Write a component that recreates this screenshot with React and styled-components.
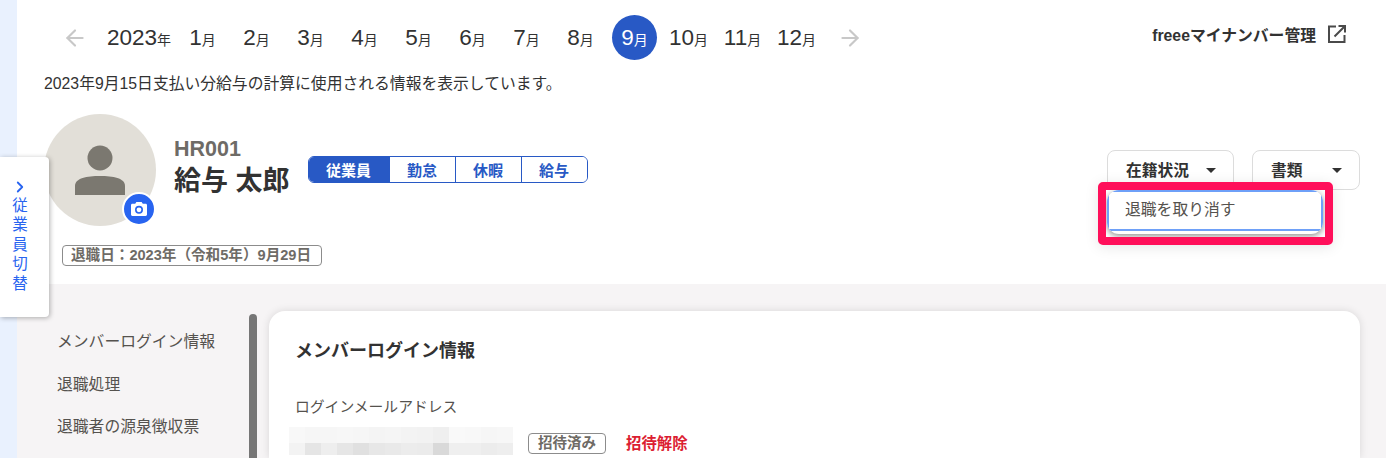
import React from 'react'
import styled, { createGlobalStyle } from 'styled-components'
import { ArrowLeft, ArrowRight, ChevronRight } from 'lucide-react'

const GlobalStyle = createGlobalStyle`
  html, body {
    margin: 0;
    height: 458px;
    overflow: hidden;
    background: #fff;
  }
  body {
    font-family: 'Liberation Sans', 'Noto Sans CJK JP', sans-serif;
    color: #323232;
  }
`

const Page = styled.div`
  display: flex;
  height: 458px;
  position: relative;
  overflow: hidden;
`

const Strip = styled.div`
  width: 17px;
  flex: none;
  background: #e9f1fe;
`

const Main = styled.main`
  flex: 1;
  display: flex;
  flex-direction: column;
  min-width: 0;
`

const Header = styled.header`
  height: 284px;
  flex: none;
  box-sizing: border-box;
  padding: 15px 26px 0 27px;
  background: #fff;
`

const TopRow = styled.div`
  display: flex;
  align-items: center;
  justify-content: space-between;
  height: 45px;
`

const MonthNav = styled.nav`
  display: flex;
  align-items: center;
  gap: 9px;
  padding-left: 18px;
`

const NavArrow = styled.span`
  display: flex;
  color: #c8c8c8;
  margin: ${p => (p.$end ? '0 0 0 9px' : '0 10px 0 0')};
`

const Year = styled.span`
  display: block;
  width: 64px;
  white-space: nowrap;
  font-size: 22.5px;
  color: #323232;
`

const Month = styled.span`
  width: 45px;
  height: 45px;
  border-radius: 50%;
  display: flex;
  align-items: center;
  justify-content: center;
  font-size: 22.5px;
  white-space: nowrap;
  color: ${p => (p.$active ? '#fff' : '#323232')};
  background: ${p => (p.$active ? '#2859c5' : 'transparent')};
`

const Unit = styled.small`
  font-size: 14px;
  margin-top: 3px;
  display: inline-block;
`

const ExternalLink = styled.a`
  display: flex;
  align-items: center;
  gap: 12px;
  font-size: 15.8px;
  font-weight: 700;
  color: #323232;
  margin: 0 14px 7px 0;
`

const Notice = styled.p`
  margin: 14px 0 0;
  font-size: 15.8px;
  line-height: 20px;
  color: #323232;
`

const Profile = styled.section`
  display: flex;
  margin-top: 20px;
`

const Avatar = styled.div`
  width: 112px;
  height: 112px;
  border-radius: 50%;
  background: #e2dfd8;
  position: relative;
  flex: none;
  display: flex;
  align-items: center;
  justify-content: center;
`

const CameraBadge = styled.span`
  position: absolute;
  right: 0;
  bottom: 0;
  width: 30px;
  height: 30px;
  border-radius: 50%;
  border: 2px solid #fff;
  background: #2864f0;
  display: flex;
  align-items: center;
  justify-content: center;
`

const Identity = styled.div`
  margin: 22px 0 0 18px;
`

const Code = styled.div`
  font-size: 21.5px;
  font-weight: 700;
  line-height: 26px;
  color: #6e6b66;
`

const Name = styled.h1`
  margin: 3px 0 0;
  font-size: 27px;
  line-height: 32px;
  font-weight: 700;
  color: #323232;
`

const Tabs = styled.div`
  display: flex;
  height: 27px;
  box-sizing: border-box;
  margin: 42px 0 0 18px;
  border: 1px solid #2859c5;
  border-radius: 6px;
  overflow: hidden;
`

const Tab = styled.span`
  width: ${p => p.$width}px;
  box-sizing: border-box;
  display: flex;
  align-items: center;
  justify-content: center;
  font-size: 15px;
  font-weight: 700;
  padding-bottom: 1px;
  color: ${p => (p.$active ? '#fff' : '#2859c5')};
  background: ${p => (p.$active ? '#2859c5' : '#fff')};
  & + & {
    border-left: 1px solid #2859c5;
  }
`

const Actions = styled.div`
  margin: 36px 0 0 auto;
  display: flex;
  gap: 18px;
`

const SelectButton = styled.button`
  width: ${p => p.$width}px;
  height: 40px;
  box-sizing: border-box;
  border: 1px solid #dcdcdc;
  border-radius: 8px;
  background: #fff;
  font: 700 15.75px 'Liberation Sans', 'Noto Sans CJK JP', sans-serif;
  color: #323232;
  display: flex;
  align-items: center;
  justify-content: space-between;
  padding: 0 17px 2px 18px;
`

const Caret = styled.i`
  width: 0;
  height: 0;
  margin-top: 3px;
  border-left: 5px solid transparent;
  border-right: 5px solid transparent;
  border-top: 5px solid #323232;
`

const RetireBadge = styled.div`
  width: 260px;
  height: 21px;
  box-sizing: border-box;
  margin: 19px 0 0 18px;
  border: 1px solid #8c8c8c;
  border-radius: 4px;
  font-size: 14.6px;
  font-weight: 700;
  line-height: 18px;
  color: #6e6b66;
  padding-left: 8px;
  white-space: nowrap;
`

const Content = styled.div`
  flex: 1;
  display: flex;
  background: #f6f4f5;
  min-height: 0;
  padding-left: 27px;
`

const SideNav = styled.ul`
  list-style: none;
  margin: 0;
  padding: 47px 0 0 13px;
  width: 192px;
  box-sizing: border-box;
  font-size: 15.8px;
  color: #55524e;
`

const SideItem = styled.li`
  height: 42.5px;
  line-height: 22px;
  white-space: nowrap;
`

const Scrollbar = styled.div`
  width: 8px;
  margin: 30px 0 0 13px;
  background: #767676;
  border-radius: 4px 4px 0 0;
  flex: none;
`

const Card = styled.section`
  width: 1091px;
  margin: 27px 0 0 12px;
  flex: none;
  box-sizing: border-box;
  padding: 27px 26px 0 26px;
  background: #fff;
  border-radius: 16px 16px 0 0;
  box-shadow: 0 0 8px rgba(0, 0, 0, 0.12);
`

const CardTitle = styled.h2`
  margin: 0;
  font-size: 18px;
  line-height: 26px;
  font-weight: 700;
  color: #323232;
`

const FieldLabel = styled.div`
  margin-top: 32px;
  font-size: 14.8px;
  line-height: 22px;
  color: #55524e;
`

const FieldRow = styled.div`
  display: flex;
  margin: 9px 0 0 -6px;
`

const Mosaic = styled.div`
  display: grid;
  grid-template-columns: repeat(14, 16px);
  grid-template-rows: 16px 12px;
  flex: none;
`

const MosaicCell = styled.span`
  background: ${p => p.$shade};
`

const InviteBadge = styled.span`
  margin: 6px 0 0 15px;
  width: 78px;
  height: 21px;
  box-sizing: border-box;
  border: 1px solid #8c8c8c;
  border-radius: 4px;
  font-size: 14.5px;
  font-weight: 700;
  line-height: 18px;
  text-align: center;
  color: #6e6b66;
`

const DangerLink = styled.a`
  margin: 6px 0 0 20px;
  font-size: 15.4px;
  font-weight: 700;
  line-height: 21px;
  color: #dc1e32;
`

const SwitchTab = styled.aside`
  position: absolute;
  left: 0;
  top: 157px;
  width: 49px;
  height: 160px;
  box-sizing: border-box;
  padding: 21px 9px 0 0;
  background: #fff;
  border-radius: 0 4px 4px 0;
  box-shadow: 1px 1px 5px rgba(0, 0, 0, 0.3);
  display: flex;
  flex-direction: column;
  align-items: center;
  color: #2864f0;
  font-size: 15.5px;
  line-height: 19.4px;
`

const SwitchChevron = styled(ChevronRight)`
  flex: none;
`

const Highlight = styled.div`
  position: absolute;
  left: 1098px;
  top: 182px;
  width: 235px;
  height: 63px;
  box-sizing: border-box;
  border: 8px solid #ff0f5a;
  border-radius: 5px;
  padding-left: 1px;
  background: #fff;
  overflow: hidden;
  box-shadow: 0 2px 14px rgba(0, 0, 0, 0.1);
`

const MenuPanel = styled.div`
  width: 216px;
  height: 44px;
  background: #fff;
  border-radius: 12px;
  overflow: hidden;
  box-shadow: 0 2px 6px rgba(0, 0, 0, 0.45);
`

const MenuItem = styled.div`
  height: 41px;
  box-sizing: border-box;
  border: 2px solid #6ea0f8;
  border-radius: 2px;
  padding-left: 16px;
  font-size: 15.8px;
  line-height: 35px;
  color: #55524e;
`

const months = [1, 2, 3, 4, 5, 6, 7, 8, 9, 10, 11, 12]
const tabs = [
  { label: '従業員', width: 80, active: true },
  { label: '勤怠', width: 66 },
  { label: '休暇', width: 66 },
  { label: '給与', width: 66 },
]
const sideItems = ['メンバーログイン情報', '退職処理', '退職者の源泉徴収票']
const mosaicShades = [
  '#f8f8f8', '#f6f6f6', '#f6f6f6', '#f7f7f7', '#f6f6f6', '#f4f4f4', '#f5f5f5', '#f3f3f3', '#f2f2f2', '#efefef', '#f9f9f9', '#f8f8f8', '#f6f6f6', '#f7f7f7',
  '#f3f3f3', '#e5e5e5', '#eeeeee', '#e6e6e6', '#e0e0e0', '#e7e7e7', '#e9e9e9', '#ececec', '#ebebeb', '#d9d9d9', '#efefef', '#efefef', '#ececec', '#eeeeee',
]

const PersonIcon = () => (
  <svg width="50" height="50" viewBox="0 0 50 50" fill="#7b7870">
    <circle cx="25" cy="13" r="12.5" />
    <path d="M0 50V41C0 33 12 31 25 31S50 33 50 41V50Z" />
  </svg>
)

const CameraIcon = () => (
  <svg width="16" height="14" viewBox="0 0 16 14">
    <path fill="#fff" d="M5.4 0 4.2 1.8H1.4C.6 1.8 0 2.4 0 3.2v9.4C0 13.4.6 14 1.4 14h13.2c.8 0 1.4-.6 1.4-1.4V3.2c0-.8-.6-1.4-1.4-1.4h-2.8L10.6 0Z" />
    <circle cx="8" cy="7.8" r="3.2" fill="none" stroke="#2864f0" strokeWidth="1.6" />
  </svg>
)

const OpenIcon = () => (
  <svg width="18" height="18" viewBox="0 0 18 18" fill="none" stroke="#4a4a4a" strokeWidth="2">
    <path d="M8 1.5H1V17H16.5V10" />
    <path d="M6.5 11.5 16.5 1.5M10.5 1H17V7.5" />
  </svg>
)

const App = () => (
  <Page>
    <GlobalStyle />
    <Strip />
    <Main>
      <Header>
        <TopRow>
          <MonthNav>
            <NavArrow><ArrowLeft size={26} strokeWidth={2} /></NavArrow>
            <Year>2023<Unit>年</Unit></Year>
            {months.map(m => (
              <Month key={m} $active={m === 9}>{m}<Unit>月</Unit></Month>
            ))}
            <NavArrow $end><ArrowRight size={26} strokeWidth={2} /></NavArrow>
          </MonthNav>
          <ExternalLink>freeeマイナンバー管理<OpenIcon /></ExternalLink>
        </TopRow>
        <Notice>2023年9月15日支払い分給与の計算に使用される情報を表示しています。</Notice>
        <Profile>
          <Avatar>
            <PersonIcon />
            <CameraBadge><CameraIcon /></CameraBadge>
          </Avatar>
          <Identity>
            <Code>HR001</Code>
            <Name>給与 太郎</Name>
          </Identity>
          <Tabs>
            {tabs.map(t => (
              <Tab key={t.label} $width={t.width} $active={t.active}>{t.label}</Tab>
            ))}
          </Tabs>
          <Actions>
            <SelectButton $width={127}>在籍状況<Caret /></SelectButton>
            <SelectButton $width={108}>書類<Caret /></SelectButton>
          </Actions>
        </Profile>
        <RetireBadge>退職日：2023年（令和5年）9月29日</RetireBadge>
      </Header>
      <Content>
        <SideNav>
          {sideItems.map(item => <SideItem key={item}>{item}</SideItem>)}
        </SideNav>
        <Scrollbar />
        <Card>
          <CardTitle>メンバーログイン情報</CardTitle>
          <FieldLabel>ログインメールアドレス</FieldLabel>
          <FieldRow>
            <Mosaic>
              {mosaicShades.map((shade, i) => <MosaicCell key={i} $shade={shade} />)}
            </Mosaic>
            <InviteBadge>招待済み</InviteBadge>
            <DangerLink>招待解除</DangerLink>
          </FieldRow>
        </Card>
      </Content>
    </Main>
    <SwitchTab>
      <SwitchChevron size={18} strokeWidth={2.4} />
      <span>従</span>
      <span>業</span>
      <span>員</span>
      <span>切</span>
      <span>替</span>
    </SwitchTab>
    <Highlight>
      <MenuPanel>
        <MenuItem>退職を取り消す</MenuItem>
      </MenuPanel>
    </Highlight>
  </Page>
)

export default App
